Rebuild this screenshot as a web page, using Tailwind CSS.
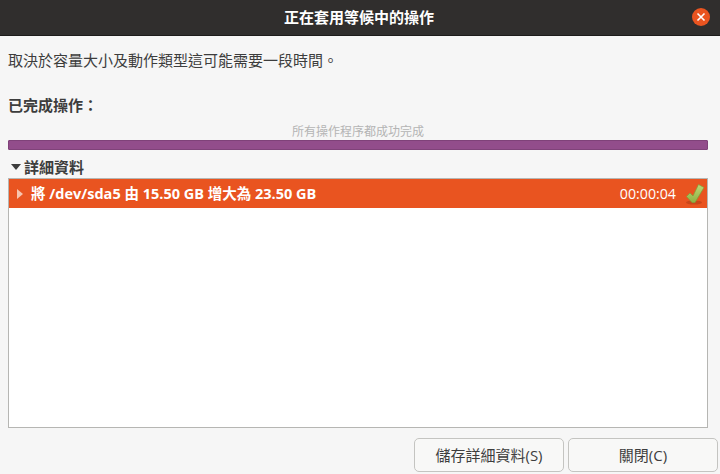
<!DOCTYPE html>
<html lang="zh-TW">
<head>
<meta charset="utf-8">
<script src="https://cdn.jsdelivr.net/npm/@tailwindcss/browser@4"></script>
</head>
<body class="m-0">
<div class="w-[720px] h-[474px] flex flex-col overflow-hidden bg-[#f6f6f6] text-[#3d3d3d] text-[15px] font-['Open_Sans','Noto_Sans_CJK_TC',sans-serif]">
    <div class="h-9 shrink-0 relative flex items-center justify-center pr-[2px] bg-[#302e2d] border-b border-[#1d1c1b] text-white font-bold">
        <span>正在套用等候中的操作</span>
        <div class="absolute right-[10px] top-2 size-[18px] rounded-full bg-[#e95420] flex items-center justify-center">
            <svg width="10" height="10" viewBox="0 0 10 10"><path d="M1.5 1.5l7 7M8.5 1.5l-7 7" stroke="#fff" stroke-width="1.6" fill="none"/></svg>
        </div>
    </div>
    <div class="flex-1 flex flex-col px-2 min-h-0">
        <p class="h-[20px] mt-[14px] leading-[20px]">取決於容量大小及動作類型這可能需要一段時間。</p>
        <p class="h-[20px] mt-[25px] leading-[20px] font-bold">已完成操作：</p>
        <p class="h-[16px] mt-[9px] pr-1 leading-[16px] text-center text-[12px] text-[#b4b4b4]">所有操作程序都成功完成</p>
        <div class="h-[10px] w-[700px] rounded-[1px] bg-[#924d8b] border border-[#7f4279]"></div>
        <div class="h-[20px] mt-2 pb-[2px] flex items-center gap-[3px] font-bold">
            <svg width="10" height="6" viewBox="0 0 10 6" class="ml-[3px]"><path d="M0 0h10L5 6z" fill="#3d3d3d"/></svg>
            <span>詳細資料</span>
        </div>
        <div class="h-[250px] w-[700px] bg-white border border-[#b6b6b3]">
            <div class="h-[29px] flex items-center bg-[#e95420] text-white text-[14.5px] font-bold">
                <svg width="6" height="10" viewBox="0 0 6 10" class="ml-2"><path d="M0 0l6 5-6 5z" fill="#f7c4ae"/></svg>
                <span class="ml-2 pt-px">將 /dev/sda5 由 15.50 GB 增大為 23.50 GB</span>
                <span class="ml-auto text-[14.2px] font-normal">00:00:04</span>
                <svg width="20" height="22" viewBox="0 0 20 22" class="ml-[9px] mr-[2px]">
                    <defs>
                        <linearGradient id="checkFill" x1="0" y1="0" x2="0" y2="1">
                            <stop offset="0" stop-color="#bcd878"/>
                            <stop offset="1" stop-color="#8fb042"/>
                        </linearGradient>
                    </defs>
                    <ellipse cx="9" cy="19.5" rx="8" ry="2" fill="#c9471a"/>
                    <path d="M1.5 13.5L5 10 8 13 13.5 1.5 19 4.5 10 19.5 7 19.5z" fill="url(#checkFill)" stroke="#7f9f38" stroke-width="0.7"/>
                </svg>
            </div>
        </div>
        <div class="mt-[10px] flex justify-end gap-1">
            <button class="w-[150px] h-[34px] rounded-[5px] border border-[#c4c4c1] bg-[#f8f8f7]">儲存詳細資料(S)</button>
            <button class="w-[150px] h-[34px] rounded-[5px] border border-[#c4c4c1] bg-[#f8f8f7] -mr-[6px]">關閉(C)</button>
        </div>
    </div>
</div>
</body>
</html>
